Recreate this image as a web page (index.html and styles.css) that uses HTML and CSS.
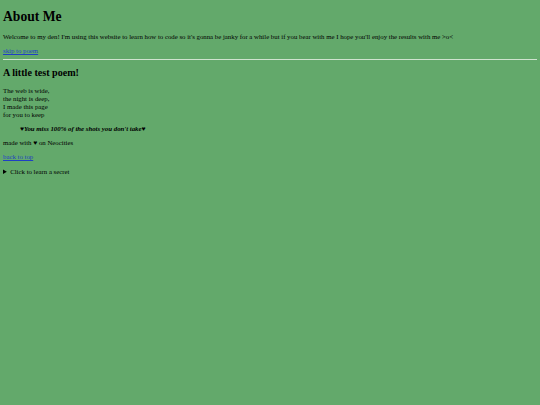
FILE: index.html
```html
<!DOCTYPE html>
<html>
<head>
<meta charset="utf-8">
<title>About Me</title>
<link rel="stylesheet" href="styles.css">
</head>
<body id="top">
<h1 class="title">About Me</h1>
<p class="para">Welcome to my den! I'm using this website to learn how to code so it's gonna be janky for a while but if you bear with me I hope you'll enjoy the results with me &gt;o&lt;</p>
<a class="link" href="#poem">skip to poem</a>
<hr class="rule">
<h2 class="subtitle" id="poem">A little test poem!</h2>
<p class="para">The web is wide,<br>the night is deep,<br>I made this page<br>for you to keep</p>
<blockquote class="quote"><b><i>♥You miss 100% of the shots you don't take♥</i></b></blockquote>
<p class="para">made with ♥ on Neocities</p>
<a class="link" href="#top">back to top</a>
<details class="secret"><summary>Click to learn a secret</summary><p class="para">Secret!</p></details>
</body>
</html>
```
FILE: styles.css
```css
html { background: #63a96b; }
body {
  margin: 0;
  padding: 0.1px 3px 0;
  font-family: "Liberation Serif", "Times New Roman", serif;
  font-size: 6.8px;
  line-height: 8px;
  color: #000;
}
.title { font-size: 13.6px; line-height: 16px; margin: 8.6px 0 8.3px; }
.subtitle { font-size: 10.1px; line-height: 11.5px; margin: 7px 0 8.5px; }
.para { margin: 6px 0; }
.link { color: #1f3fc4; }
.rule { border: 0; border-top: 1px solid #cfe3cf; margin: 4px 0; }
.quote { margin: 6px 0 6px 17px; }
.secret { margin: 7px 0; }
```
